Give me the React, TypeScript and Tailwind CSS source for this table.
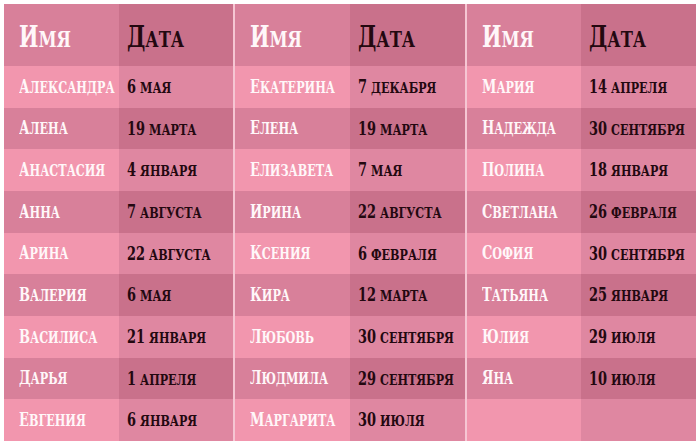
const groups: [string, string][][] = [
  [
    ["Александра", "6 мая"],
    ["Алена", "19 марта"],
    ["Анастасия", "4 января"],
    ["Анна", "7 августа"],
    ["Арина", "22 августа"],
    ["Валерия", "6 мая"],
    ["Василиса", "21 января"],
    ["Дарья", "1 апреля"],
    ["Евгения", "6 января"],
  ],
  [
    ["Екатерина", "7 декабря"],
    ["Елена", "19 марта"],
    ["Елизавета", "7 мая"],
    ["Ирина", "22 августа"],
    ["Ксения", "6 февраля"],
    ["Кира", "12 марта"],
    ["Любовь", "30 сентября"],
    ["Людмила", "29 сентября"],
    ["Маргарита", "30 июля"],
  ],
  [
    ["Мария", "14 апреля"],
    ["Надежда", "30 сентября"],
    ["Полина", "18 января"],
    ["Светлана", "26 февраля"],
    ["София", "30 сентября"],
    ["Татьяна", "25 января"],
    ["Юлия", "29 июля"],
    ["Яна", "10 июля"],
    ["", ""],
  ],
];

// small caps drawn by hand: the first letter (or the number) bigger, the rest upper case
function Name({ text }: { text: string }) {
  if (!text) return null;
  return (
    <span className="inline-block origin-left scale-x-[0.78] whitespace-nowrap">
      <span className="text-[18.5px]">{text[0]}</span>
      <span className="text-[16px] uppercase">{text.slice(1)}</span>
    </span>
  );
}

function DateText({ text }: { text: string }) {
  if (!text) return null;
  const [num, word] = text.split(" ");
  return (
    <span className="inline-block origin-left scale-x-[0.8] whitespace-nowrap">
      <span className="text-[18px]">{num}</span>{" "}
      <span className="text-[15.5px] uppercase">{word}</span>
    </span>
  );
}

function Group({ rows }: { rows: [string, string][] }) {
  return (
    <div className="flex-1 flex flex-col">
      <div className="h-[62px] grid grid-cols-2 leading-none">
        <div className="bg-[#d8809a] text-[#fff7f9] pl-[15px] pt-[5px] flex items-center">
          <span className="inline-block origin-left scale-x-[0.79]">
            <span className="text-[29px]">И</span>
            <span className="text-[23px]">МЯ</span>
          </span>
        </div>
        <div className="bg-[#c9718b] text-[#230810] pl-[8px] pt-[5px] flex items-center">
          <span className="inline-block origin-left scale-x-[0.79]">
            <span className="text-[29px]">Д</span>
            <span className="text-[23px]">АТА</span>
          </span>
        </div>
      </div>
      {rows.map(([name, date], i) => (
        <div key={i} className="flex-1 grid grid-cols-2 leading-none">
          <div
            className={
              (i % 2 === 0 ? "bg-[#f296ae]" : "bg-[#d8809a]") +
              " text-[#fff7f9] pl-[15px] flex items-center"
            }
          >
            <Name text={name} />
          </div>
          <div
            className={
              (i % 2 === 0 ? "bg-[#df87a1]" : "bg-[#c9718b]") +
              " text-[#230810] pl-[8px] flex items-center"
            }
          >
            <DateText text={date} />
          </div>
        </div>
      ))}
    </div>
  );
}

export default function App() {
  return (
    <div className="w-[700px] h-[446px] bg-white p-[4px] pb-[5px]">
      <div
        className="h-full flex gap-[2px] bg-[#f6c6d3] font-bold"
        style={{ fontFamily: '"DejaVu Serif Condensed", "DejaVu Serif", serif' }}
      >
        {groups.map((rows, i) => (
          <Group key={i} rows={rows} />
        ))}
      </div>
    </div>
  );
}
